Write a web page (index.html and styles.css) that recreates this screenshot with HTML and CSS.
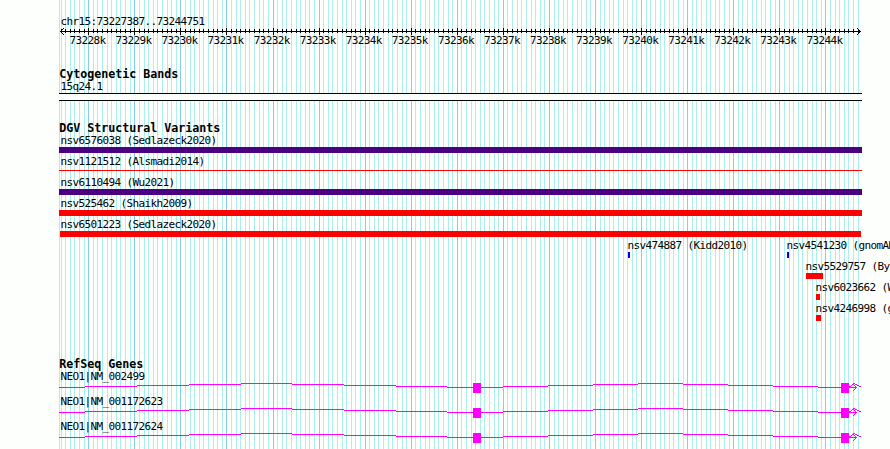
FILE: index.html
```
<!DOCTYPE html>
<html lang="en">
<head>
<meta charset="utf-8">
<title>chr15:73227387..73244751</title>
<link rel="stylesheet" href="styles.css">
</head>
<body>
<main class="browser">
  <svg class="grid" id="grid" width="890" height="449" shape-rendering="crispEdges"></svg>
  <header class="ruler">
    <p class="label">chr15:73227387..73244751</p>
    <svg class="axis" id="axis" width="890" height="9" shape-rendering="crispEdges"></svg>
    <div class="ticks" id="ticks"></div>
  </header>
  <section class="track cyto">
    <h2>Cytogenetic Bands</h2>
    <p class="label">15q24.1</p>
    <div class="band"></div>
  </section>
  <section class="track variants">
    <h2>DGV Structural Variants</h2>
    <div id="variants"></div>
  </section>
  <section class="track genes">
    <h2>RefSeq Genes</h2>
    <div id="genes"></div>
  </section>
</main>
<script src="script.js"></script>
</body>
</html>
```
FILE: styles.css
```
* { box-sizing: border-box; }
body {
  margin: 0;
  background: #fdfffc;
  color: #000;
  font: 11px/13px "DejaVu Sans Mono", "Liberation Mono", monospace;
  letter-spacing: -0.623px;
}
h2, p { margin: 0; }
.browser {
  position: relative;
  width: 890px;
  height: 449px;
  overflow: hidden;
}
.grid { position: absolute; left: 0; top: 0; z-index: -1; }
.grid .minor { fill: #afeeee; }
.grid .major { fill: #87ceeb; }
.label { padding-left: 60.5px; height: 13px; line-height: 15px; white-space: pre; }
svg { display: block; }
.ruler { padding-top: 14px; height: 67px; }
.ticks {
  display: grid;
  grid-template-columns: repeat(17, 46.07px);
  margin: -2px 0 0 64.4px;
  text-align: center;
}
.track h2 {
  padding-left: 59.3px;
  height: 12px;
  font-size: 11.7px;
  line-height: 15px;
  font-weight: bold;
  letter-spacing: -0.044px;
}
.cyto { height: 54px; }
.cyto h2 { height: 13px; }
.cyto .label { line-height: 13px; }
.band {
  width: 803px;
  height: 8px;
  margin-left: 59px;
  border: solid #000;
  border-width: 1px 0;
  background: #fdfffc;
}
.variants { height: 236px; }
.row { height: 21px; }
.row .names { display: flex; height: 14px; line-height: 15px; padding-left: 0.5px; }
.row .names span { white-space: pre; flex: none; }
.gene { height: 25px; }
```
FILE: script.js
```
const NS = "http://www.w3.org/2000/svg";
const STEP = 46.07;
const ORIGIN = 88.75;

function rect(svg, x, y, w, h, fill, cls) {
  const r = document.createElementNS(NS, "rect");
  Object.entries({ x, y, width: w, height: h }).forEach(([k, v]) => r.setAttribute(k, v));
  if (fill) r.setAttribute("fill", fill);
  if (cls) r.setAttribute("class", cls);
  svg.append(r);
}
function makeSvg(height) {
  const s = document.createElementNS(NS, "svg");
  s.setAttribute("width", 890);
  s.setAttribute("height", height);
  s.setAttribute("shape-rendering", "crispEdges");
  return s;
}

const grid = document.getElementById("grid");
const axis = document.getElementById("axis");
rect(grid, 59, 0, 1, 449, null, "minor");
rect(axis, 60, 4, 801, 1, "#000");
for (let i = -6; i <= 167; i++) {
  const major = i % 10 === 0;
  const x = Math.floor(ORIGIN + i * STEP / 10);
  rect(grid, x, 0, 1, 449, null, major ? "major" : "minor");
  if (major) rect(axis, x, 1, 1, 7, "#000");
  else rect(axis, x, 2, 1, 4, "#000");
}
for (let i = 1; i <= 3; i++) {
  rect(axis, 60 + i, 4 - i, 1, 1, "#000");
  rect(axis, 60 + i, 4 + i, 1, 1, "#000");
  rect(axis, 860 - i, 4 - i, 1, 1, "#000");
  rect(axis, 860 - i, 4 + i, 1, 1, "#000");
}
for (let k = 73228; k <= 73244; k++) {
  const t = document.createElement("span");
  t.textContent = k + "k";
  document.getElementById("ticks").append(t);
}

const INDIGO = "#4b0082", RED = "#ff0000", BLUE = "#0000ff";
const rows = [
  [["nsv6576038 (Sedlazeck2020)", 60, 59, 803, INDIGO]],
  [["nsv1121512 (Alsmadi2014)", 60, 59, 803, RED, 1]],
  [["nsv6110494 (Wu2021)", 60, 59, 803, INDIGO]],
  [["nsv525462 (Shaikh2009)", 60, 59, 803, RED]],
  [["nsv6501223 (Sedlazeck2020)", 60, 60, 801, RED]],
  [["nsv474887 (Kidd2010)", 627, 628, 2, BLUE], ["nsv4541230 (gnomAD", 786, 787, 2, BLUE]],
  [["nsv5529757 (By", 805, 806, 17, RED]],
  [["nsv6023662 (W", 815, 816, 4, RED]],
  [["nsv4246998 (g", 815, 816, 5, RED]]
];
rows.forEach(items => {
  const row = document.createElement("div");
  row.className = "row";
  const names = document.createElement("div");
  names.className = "names";
  const svg = makeSvg(7);
  let cursor = 0;
  items.forEach(([name, tx, x, w, color, thin]) => {
    const t = document.createElement("span");
    t.textContent = name;
    t.style.marginLeft = tx - cursor + "px";
    t.style.width = name.length * 6 + "px";
    cursor = tx + name.length * 6;
    names.append(t);
    rect(svg, x, thin ? 2 : 0, w, thin || 6, color);
  });
  row.append(names, svg);
  document.getElementById("variants").append(row);
});

const MAGENTA = "#ff00ff";
const segments = [
  [59, 85, 4], [85, 137, 3], [137, 189, 2], [189, 241, 1], [241, 292, 0],
  [292, 344, 1], [344, 396, 2], [396, 447, 3], [447, 503, 4],
  [503, 548, 3], [548, 593, 2], [593, 638, 1], [638, 683, 0],
  [683, 728, 1], [728, 773, 2], [773, 818, 3], [818, 857, 4]
];
["NEO1|NM_002499", "NEO1|NM_001172623", "NEO1|NM_001172624"].forEach(name => {
  const gene = document.createElement("div");
  gene.className = "gene";
  const label = document.createElement("p");
  label.className = "label";
  label.textContent = name;
  const svg = makeSvg(12);
  segments.forEach(([a, b, y]) => rect(svg, a, y + 1, b - a, 1, MAGENTA));
  rect(svg, 473, 1, 8, 10, MAGENTA);
  rect(svg, 841, 1, 8, 10, MAGENTA);
  [[849,4],[850,4],[851,3],[852,2],[853,1],[854,1],[855,2],[856,2],[857,3],[858,3],[859,4],[860,4],
   [853,2],[854,3],[855,4],[855,6],[854,7],[853,8]].forEach(([x, y]) => rect(svg, x, y, 1, 1, MAGENTA));
  gene.append(label, svg);
  document.getElementById("genes").append(gene);
});
```
